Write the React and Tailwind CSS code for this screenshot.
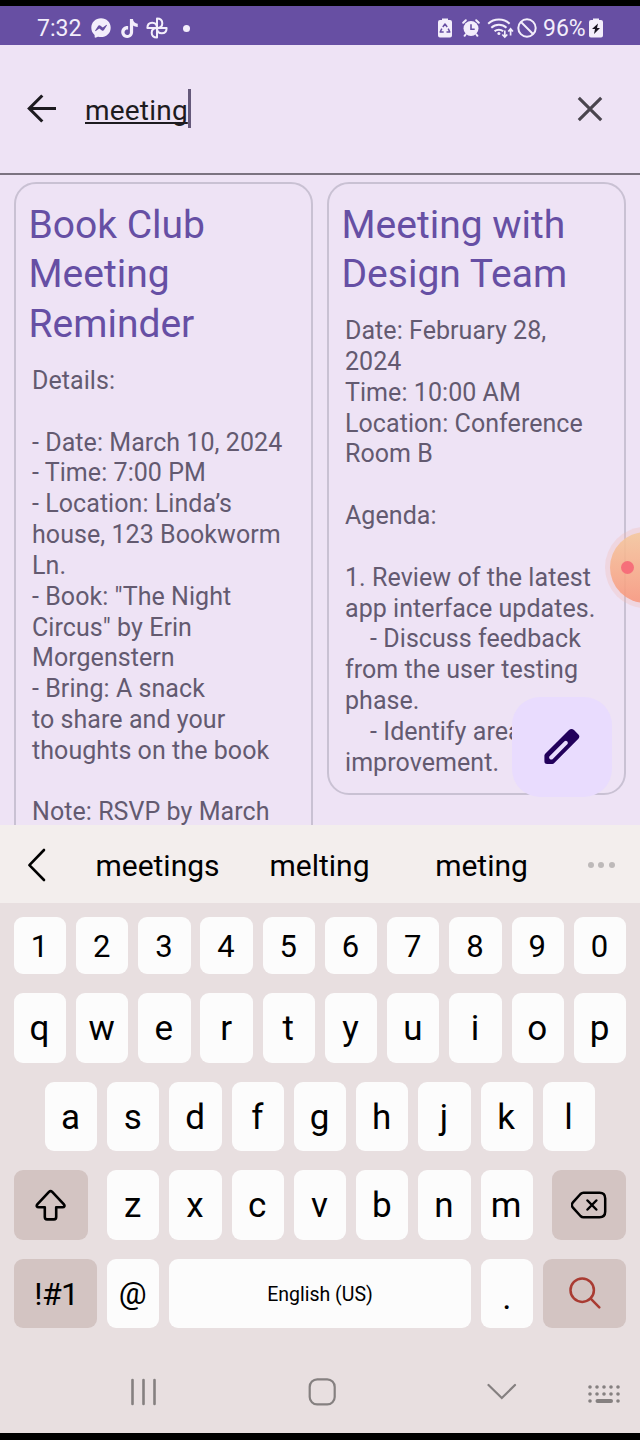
import React from "react";
import { FaFacebookMessenger } from "react-icons/fa";
import { SiTiktok } from "react-icons/si";

const bookClub = `Details:

- Date: March 10, 2024
- Time: 7:00 PM
- Location: Linda’s
house, 123 Bookworm
Ln.
- Book: "The Night
Circus" by Erin
Morgenstern
- Bring: A snack
to share and your
thoughts on the book

Note: RSVP by March`;

const designTeam = `Date: February 28,
2024
Time: 10:00 AM
Location: Conference
Room B

Agenda:

1. Review of the latest
app interface updates.
    - Discuss feedback
from the user testing
phase.
    - Identify areas for
improvement.`;

function Pinwheel() {
  const petal = "M11 11V1.4C14.6 1.4 16.3 3.4 16.3 6.2C16.3 9 14.6 11 11 11Z";
  return (
    <svg width="22" height="22" viewBox="0 0 22 22" className="ml-[7px] shrink-0" fill="none" stroke="currentColor" strokeWidth="2" strokeLinejoin="round">
      {[0, 90, 180, 270].map((a) => (
        <path key={a} d={petal} transform={`rotate(${a} 11 11)`} />
      ))}
    </svg>
  );
}

function StatusBar() {
  return (
    <div className="flex h-[39px] shrink-0 items-center bg-[#674fa3] pt-[5px] text-[23px] text-[#f3eefb]">
      <span className="ml-[37px] w-[46px] whitespace-nowrap pt-[2px]">7:32</span>
      <FaFacebookMessenger className="ml-[8px] size-[20px] shrink-0" />
      <SiTiktok className="ml-[9px] size-[19px] shrink-0" />
      <Pinwheel />
      <span className="ml-[15px] size-[7px] shrink-0 rounded-full bg-[#f3eefb]" />
      <div className="ml-auto mr-[37px] flex items-center">
        <svg width="14" height="20" viewBox="0 0 14 20" className="shrink-0">
          <path fill="currentColor" d="M4 .5h6V2h2a2 2 0 0 1 2 2v13.500a2 2 0 0 1-2 2H2a2 2 0 0 1-2-2V4a2 2 0 0 1 2-2h2Z" />
          <path fill="none" stroke="#674fa3" strokeWidth="1.500" strokeLinejoin="round" d="M4.800 9 7 6l2.200 3M10.200 10.700l1.600 3.300H8.500M3.800 10.700 2.200 14h3.500" />
        </svg>
        <svg width="18" height="18" viewBox="0 0 18 18" className="ml-[10px] shrink-0" fill="none" stroke="currentColor" strokeWidth="2" strokeLinecap="round">
          <circle cx="9" cy="9.500" r="7.500" fill="currentColor" stroke="none" />
          <path d="m1.200 3.800 2.600-2.600M16.800 3.800l-2.600-2.600M3.600 15.500l-1 1.300M14.400 15.500l1 1.300" />
          <path stroke="#674fa3" strokeWidth="1.600" strokeLinecap="butt" d="M9 5.300v4.900h3.700" />
        </svg>
        <svg width="27" height="21" viewBox="0 0 27 21" className="ml-[7px] shrink-0" fill="none" stroke="currentColor" strokeWidth="2">
          <path d="M1.200 5.800C7 .2 16.800.2 22.600 5.800M4.300 9.800c4.300-4 10.900-4 15.200 0M7.600 13.300c2.400-2.200 6.200-2.200 8.600 0" />
          <circle cx="11.900" cy="15.500" r="1.500" fill="currentColor" stroke="none" />
          <path strokeWidth="1.700" d="M17.800 12.500v6.500M15.300 16.500l2.500 2.600 2.500-2.600M23.600 17.500v-6.500M21.300 13.500l2.300-2.600 2.300 2.600" />
        </svg>
        <svg width="20" height="20" viewBox="0 0 20 20" className="-mt-[1px] ml-[3px] shrink-0" fill="none" stroke="currentColor" strokeWidth="2">
          <circle cx="10" cy="10" r="8.700" />
          <path d="m4 4 12 12" />
        </svg>
        <span className="ml-[6px] w-[43px] whitespace-nowrap pt-[2px] text-[23px]">96%</span>
        <svg width="14" height="20" viewBox="0 0 14 20" preserveAspectRatio="none" className="ml-[3px] shrink-0">
          <path fill="currentColor" d="M4 .5h6V2h2a2 2 0 0 1 2 2v13.500a2 2 0 0 1-2 2H2a2 2 0 0 1-2-2V4a2 2 0 0 1 2-2h2Z" />
          <path fill="#16121f" d="M9 5.500 3 11h3l-1 5 6-6H8Z" />
        </svg>
      </div>
    </div>
  );
}

function SearchHeader() {
  return (
    <div className="flex h-[130px] shrink-0 items-center border-b-2 border-[#7b7380] pl-[27px]">
      <svg width="30" height="30" viewBox="0 0 30 30" className="shrink-0" fill="none" stroke="#1d1b20" strokeWidth="3.100">
        <path d="M29 14.500H3M15.300 1.500l-13 13 13 13" />
      </svg>
      <span className="ml-[28px] mt-[3px] inline-block w-[103px] whitespace-nowrap text-[28px] leading-[38px] tracking-[0.200px] text-[#1d1b20] underline decoration-[1.500px] underline-offset-[2px] [text-decoration-skip-ink:none]">meeting</span>
      <span className="-mt-px h-[39px] w-[3px] bg-[#65597a]" />
      <svg width="26" height="26" viewBox="0 0 26 26" className="ml-auto mr-[37px] shrink-0" fill="none" stroke="#4a454e" strokeWidth="3.100">
        <path d="m1.800 1.800 22.400 22.400M24.200 1.800 1.800 24.200" />
      </svg>
    </div>
  );
}

function NoteCard({ title, body, extra }) {
  return (
    <article className={`w-[299px] shrink-0 rounded-[22px] border-2 border-[#c9c1d3] ${extra}`}>
      <h2 className="whitespace-pre pl-[12.500px] pt-[16.500px] text-[39px] leading-[49.800px] text-[#664fa4]">{title}</h2>
      <p className="whitespace-pre pb-[16px] pl-[16px] pt-[16px] text-[25px] leading-[30.830px] tracking-[0.060px] text-[#635a70]">{body}</p>
    </article>
  );
}

function Notes() {
  return (
    <main className="relative h-[650px] shrink-0 overflow-hidden">
      <div className="flex items-start gap-[14px] pl-[14px] pt-[7px]">
        <NoteCard title={"Book Club\nMeeting\nReminder"} body={bookClub} extra="h-[720px]" />
        <NoteCard title={"Meeting with\nDesign Team"} body={designTeam} extra="h-[613px]" />
      </div>
      <div className="absolute left-[605px] top-[352px] flex size-[81px] items-center rounded-full bg-[#f3b8ae]/30 pl-[5px]">
        <div className="flex size-[71px] items-center rounded-full bg-linear-to-b from-[#f4c89c]/85 to-[#f8957a]/85 pl-[10.500px]">
          <span className="size-[13px] rounded-full bg-[#f66f7a]" />
        </div>
      </div>
      <button className="absolute left-[512px] top-[522px] flex size-[100px] items-center justify-center rounded-[28px] bg-[#e9dcfe]">
        <svg width="36" height="36" viewBox="0 0 36 36" fill="#22005b">
          <path fillRule="evenodd" d="M.4 26.600Q.4 25.500 1.200 24.700L25 1Q27.500-1 30 1L34.400 5.500Q36.300 7.500 34.400 9.800L10.300 34Q9.500 34.900 8.300 34.900H3Q.4 34.900.4 32.300ZM5.300 27.400Q4.800 29 5.800 30Q7 31 8.500 30.300L23.300 15.300Q24.300 13.800 23.300 12.600Q22 11.300 20.500 12.300Z" />
        </svg>
      </button>
    </main>
  );
}

function Suggestions() {
  return (
    <div className="flex h-[78px] shrink-0 items-center bg-[#f3eeed] text-[30px] text-black">
      <svg width="20" height="34" viewBox="0 0 20 34" className="ml-[27px] mt-px shrink-0" fill="none" stroke="black" strokeWidth="2.600" strokeLinecap="round" strokeLinejoin="round">
        <path d="M17 2 2.400 17.200 17 32" />
      </svg>
      <div className="ml-[29.500px] flex w-[486px] items-center pt-[3px] text-center">
        <span className="w-[162px]">meetings</span>
        <span className="w-[162px]">melting</span>
        <span className="w-[162px]">meting</span>
      </div>
      <div className="ml-[25px] mt-px flex gap-[4.500px]">
        <span className="size-[6px] rounded-full bg-[#bdb9b9]" />
        <span className="size-[6px] rounded-full bg-[#bdb9b9]" />
        <span className="size-[6px] rounded-full bg-[#bdb9b9]" />
      </div>
    </div>
  );
}

function Key({ children, className = "w-[52.400px] bg-[#fcfcfc] pr-px pt-[2px] text-[35px]" }) {
  return <div className={`flex shrink-0 items-center justify-center rounded-[9px] ${className}`}>{children}</div>;
}

function Keyboard() {
  return (
    <div className="flex h-[426px] shrink-0 flex-col px-[13.700px] pt-[14px] leading-none text-black">
      <div className="flex h-[57px] justify-between">
        {[..."1234567890"].map((k) => (
          <Key key={k} className="w-[52.400px] bg-[#fcfcfc] pr-px pt-[2px] text-[31px]">{k}</Key>
        ))}
      </div>
      <div className="mt-[19px] flex h-[69.500px] justify-between">
        {[..."qwertyuiop"].map((k) => <Key key={k}>{k}</Key>)}
      </div>
      <div className="mt-[19.200px] flex h-[69.300px] justify-center gap-[9.850px]">
        {[..."asdfghjkl"].map((k) => <Key key={k}>{k}</Key>)}
      </div>
      <div className="mt-[19.200px] flex h-[69.500px] justify-between">
        <Key className="w-[74.400px] bg-[#d3c4c2]">
          <svg width="32" height="32" viewBox="0 0 32 32" fill="none" stroke="black" strokeWidth="2.600" strokeLinejoin="round">
            <path d="M14 2.900 2.500 15.200C1 16.900 1.800 18.300 3.800 18.300H9.800V28C9.800 29.700 10.600 30.400 12 30.400H19C20.400 30.400 21.200 29.700 21.200 28V18.300H27.400C29.400 18.300 30.200 16.900 28.700 15.200L17.200 2.900C16.200 1.900 15 1.900 14 2.900Z" />
          </svg>
        </Key>
        <div className="flex gap-[9.850px]">
          {[..."zxcvbnm"].map((k) => <Key key={k}>{k}</Key>)}
        </div>
        <Key className="w-[74.400px] bg-[#d3c4c2]">
          <svg width="36" height="28" viewBox="0 0 36 28" fill="none" stroke="black" strokeWidth="2.500" strokeLinejoin="round" strokeLinecap="round">
            <path d="M12.500 1.800H28.500Q34.200 1.800 34.200 7.500V20.500Q34.200 26.200 28.500 26.200H12.500Q10.800 26.200 9.500 25L1.700 16.300Q-.1 14 1.700 11.700L9.500 3Q10.800 1.800 12.500 1.800ZM16.500 9.500l8.800 9M25.300 9.500l-8.800 9" />
          </svg>
        </Key>
      </div>
      <div className="mt-[19.200px] flex h-[69px] justify-between">
        <Key className="w-[83.400px] bg-[#d3c4c2] pl-[2px] pt-[2px] text-[32px] tracking-[-0.600px]">!#1</Key>
        <Key className="w-[52.400px] bg-[#fcfcfc] pr-px text-[31px]">@</Key>
        <Key className="w-[301.400px] bg-[#fcfcfc] pt-[3px] text-[19.500px]">English (US)</Key>
        <Key className="w-[52.400px] bg-[#fcfcfc] pt-[8px] text-[35px]">.</Key>
        <Key className="w-[83.400px] bg-[#d3c4c2]">
          <svg width="32" height="32" viewBox="0 0 32 32" fill="none" stroke="#a93b32" strokeWidth="2.500" strokeLinecap="round">
            <circle cx="13.200" cy="13.200" r="11.700" />
            <path d="m21.700 21.700 8.600 8.600" />
          </svg>
        </Key>
      </div>
    </div>
  );
}

function NavBar() {
  return (
    <nav className="flex h-[104px] shrink-0 items-center pt-[22px] text-[#858080]">
      <svg width="28" height="28" viewBox="0 0 28 28" className="ml-[130px] shrink-0" stroke="currentColor" strokeWidth="2.600" strokeLinecap="round">
        <path d="M2.500 2v24M13.500 2v24M24.500 2v24" />
      </svg>
      <svg width="28" height="28" viewBox="0 0 28 28" className="ml-[150px] shrink-0" fill="none" stroke="currentColor" strokeWidth="2.200">
        <rect x="1.700" y="1.400" width="25" height="25" rx="7.500" />
      </svg>
      <svg width="30" height="18" viewBox="0 0 30 18" className="ml-[151px] shrink-0" fill="none" stroke="currentColor" strokeWidth="2.200" strokeLinecap="round">
        <path d="M1.500 2 14.800 15 28 2" />
      </svg>
      <svg width="34" height="20" viewBox="0 0 34 20" className="ml-[70px] mt-[3px] shrink-0" fill="currentColor">
        {[3, 10, 17, 24, 31].map((x) => (
          <g key={x}>
            <circle cx={x} cy="3" r="1.800" />
            <circle cx={x} cy="10" r="1.800" />
          </g>
        ))}
        <circle cx="3" cy="17" r="1.800" />
        <circle cx="31" cy="17" r="1.800" />
        <rect x="8.500" y="15" width="17.500" height="4" rx="2" />
      </svg>
    </nav>
  );
}

export default function App() {
  return (
    <div className="flex h-[1440px] w-[640px] flex-col overflow-hidden border-b-[7px] border-t-[6px] border-black bg-[#eee3f5] font-[Roboto,sans-serif]">
      <StatusBar />
      <SearchHeader />
      <Notes />
      <Suggestions />
      <div className="flex h-[530px] shrink-0 flex-col bg-[#e8dfe0]">
        <Keyboard />
        <NavBar />
      </div>
    </div>
  );
}
